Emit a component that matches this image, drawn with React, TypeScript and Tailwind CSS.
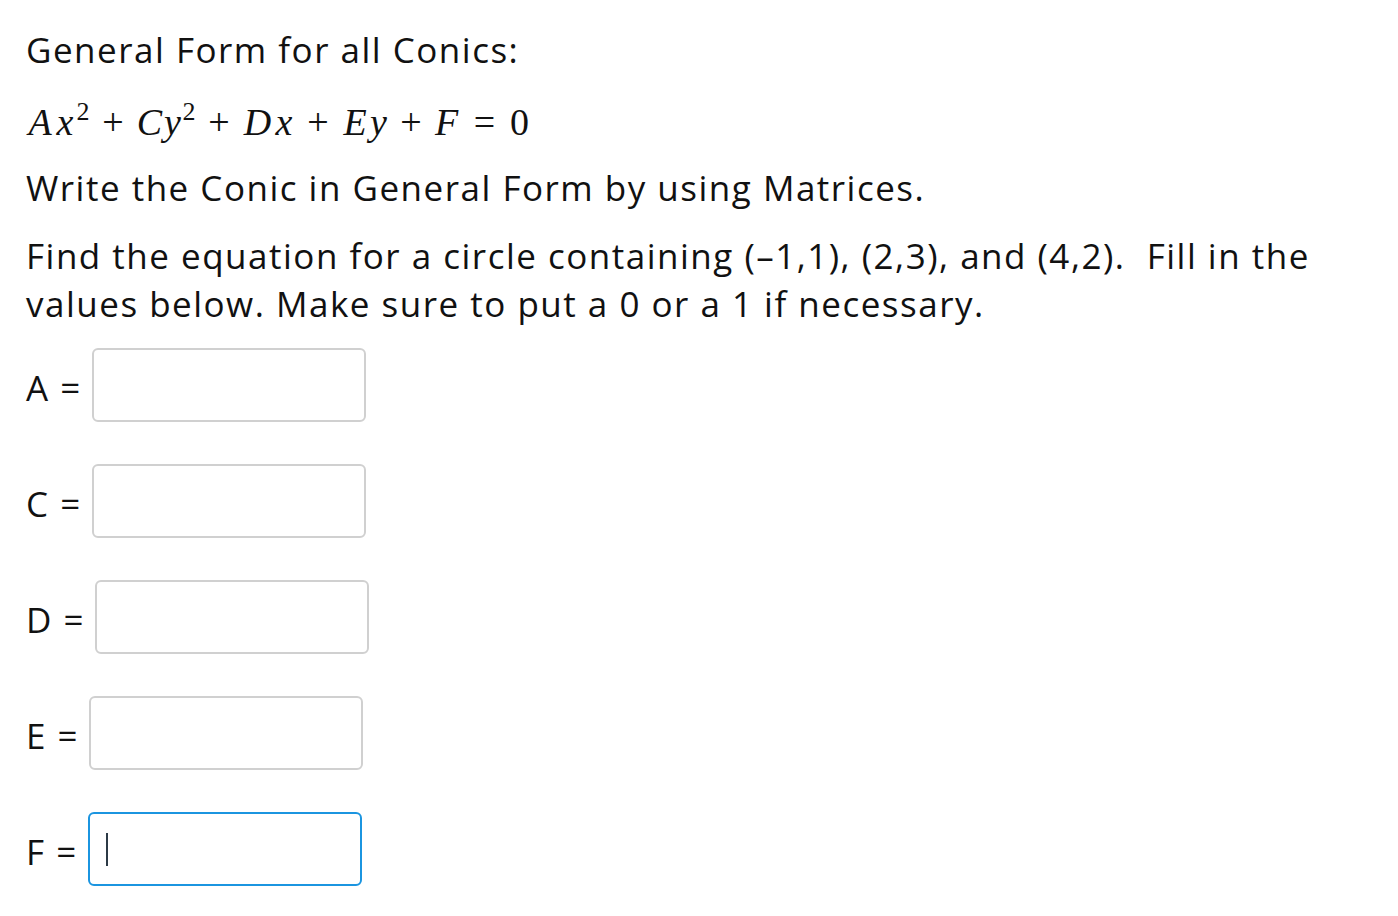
import React from 'react';

const fields = [
  { label: 'A', focused: false },
  { label: 'C', focused: false },
  { label: 'D', focused: false },
  { label: 'E', focused: false },
  { label: 'F', focused: true },
];

// each token gets the advance a TeX math font would give it
const Tok: React.FC<{ w: string; italic?: boolean; children: React.ReactNode }> = ({ w, italic, children }) => (
  <span className={`inline-block text-center ${w} ${italic ? 'italic' : ''}`}>{children}</span>
);

const Sup: React.FC<{ children: React.ReactNode }> = ({ children }) => (
  <span className="relative -top-[15px] inline-block w-[14px] text-center text-[26px] leading-none">{children}</span>
);

const MathLine: React.FC = () => (
  <div
    className="flex h-[52px] items-baseline whitespace-nowrap text-[38px] leading-[52px] text-[#111]"
    style={{ fontFamily: '"Liberation Serif", "DejaVu Serif", serif' }}
  >
    <Tok w="w-[28px]" italic>A</Tok>
    <Tok w="w-[22px]" italic>x</Tok>
    <Sup>2</Sup>
    <Tok w="w-[46px]">+</Tok>
    <Tok w="w-[27px]" italic>C</Tok>
    <Tok w="w-[19px]" italic>y</Tok>
    <Sup>2</Sup>
    <Tok w="w-[46px]">+</Tok>
    <Tok w="w-[31px]" italic>D</Tok>
    <Tok w="w-[22px]" italic>x</Tok>
    <Tok w="w-[46px]">+</Tok>
    <Tok w="w-[28px]" italic>E</Tok>
    <Tok w="w-[19px]" italic>y</Tok>
    <Tok w="w-[46px]">+</Tok>
    <Tok w="w-[25px]" italic>F</Tok>
    <Tok w="w-[51px]">=</Tok>
    <Tok w="w-[19px]">0</Tok>
  </div>
);

export default function App() {
  return (
    <div
      className="min-h-screen bg-white px-[26px] pt-[26px] text-[35px] leading-[48px] tracking-[1.5px] text-[#111]"
      style={{ fontFamily: '"Open Sans", "Noto Sans", sans-serif' }}
    >
      <p>General Form for all Conics:</p>
      <div className="mt-[22px] tracking-normal">
        <MathLine />
      </div>
      <p className="mt-[16px]">Write the Conic in General Form by using Matrices.</p>
      <p className="mt-[20px]">
        Find the equation for a circle containing (–1,1), (2,3), and (4,2).&nbsp; Fill in the values below. Make sure
        to put a 0 or a 1 if necessary.
      </p>

      <div className="mt-[20px] flex flex-col gap-[42px]">
        {fields.map((f) => (
          <div key={f.label} className="flex items-center">
            <span className="mr-[10px] pt-[6px]">{f.label} =</span>
            <div
              className={
                f.focused
                  ? 'flex h-[74px] w-[274px] items-center rounded-[6px] border-2 border-[#1b95e0] bg-white pl-[16px]'
                  : 'flex h-[74px] w-[274px] items-center rounded-[6px] border-2 border-[#d0d0d0] bg-white pl-[16px]'
              }
            >
              {f.focused && <span className="h-[33px] w-[2px] bg-[#2c3a46]" />}
            </div>
          </div>
        ))}
      </div>
    </div>
  );
}
